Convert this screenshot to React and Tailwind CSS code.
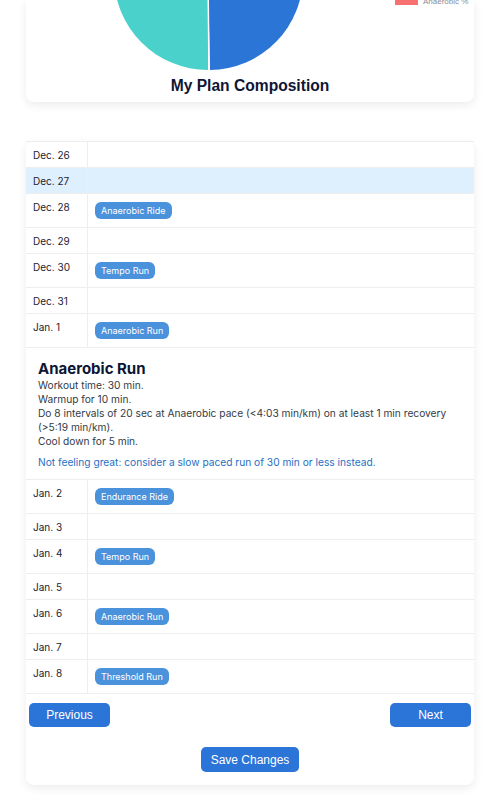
const days = [
  { date: 'Dec. 26' },
  { date: 'Dec. 27', today: true },
  { date: 'Dec. 28', workout: 'Anaerobic Ride' },
  { date: 'Dec. 29' },
  { date: 'Dec. 30', workout: 'Tempo Run' },
  { date: 'Dec. 31' },
  { date: 'Jan. 1', workout: 'Anaerobic Run', open: true },
  { date: 'Jan. 2', workout: 'Endurance Ride' },
  { date: 'Jan. 3' },
  { date: 'Jan. 4', workout: 'Tempo Run' },
  { date: 'Jan. 5' },
  { date: 'Jan. 6', workout: 'Anaerobic Run' },
  { date: 'Jan. 7' },
  { date: 'Jan. 8', workout: 'Threshold Run' },
];

const Detail = () => (
  <div className="border-b border-[#eeeeee] px-3 pt-[12px] pb-[10px] text-[10.2px] leading-[14px] text-[#333a45]">
    <h3 className="text-[15px] leading-[18px] font-bold text-[#0d1535]">Anaerobic Run</h3>
    <p>Workout time: 30 min.</p>
    <p>Warmup for 10 min.</p>
    <p>Do 8 intervals of 20 sec at Anaerobic pace (&lt;4:03 min/km) on at least 1 min recovery (&gt;5:19 min/km).</p>
    <p>Cool down for 5 min.</p>
    <p className="mt-[7px] text-[#1f6fc4]">Not feeling great: consider a slow paced run of 30 min or less instead.</p>
  </div>
);

const App = () => {
  return (
    <div className="min-h-screen bg-white px-[26px] font-['Inter',sans-serif]">
      {/* chart card */}
      <div className="rounded-b-lg bg-white shadow-[0_3px_10px_rgba(0,0,0,0.08)] pb-[6px]">
        <svg width="448" height="70" viewBox="0 0 448 70" className="block">
          <path d="M182 -24 L182 70 A94 94 0 0 1 182 -118 Z" fill="#4bd1cb" />
          <path d="M182 -24 L182 -118 A94 94 0 0 1 184 70 Z" fill="#2b75d7" />
          <line x1="182" y1="-24" x2="183" y2="70" stroke="#ffffff" strokeWidth="1.5" />
          <rect x="369" y="-6" width="23" height="11" fill="#f87171" />
          <text x="397" y="4" fontSize="8" fill="#8a8f99" fontFamily="Liberation Sans, Arial, sans-serif">Anaerobic %</text>
        </svg>
        <h2 className="mt-[6px] text-center font-['Liberation_Sans',Arial,sans-serif] text-[15.6px] leading-[20px] font-bold text-[#0f1635]">
          My Plan Composition
        </h2>
      </div>

      {/* calendar card */}
      <div className="mt-[39px] rounded-lg bg-white shadow-[0_3px_10px_rgba(0,0,0,0.08)] pb-[13px]">
        <div className="border-t border-[#eeeeee]">
          {days.map((d) => (
            <div key={d.date}>
              <div className={`flex border-b border-[#eeeeee] ${d.today ? 'bg-[#def0fd]' : ''}`}>
                <div className="w-[62px] shrink-0 border-r border-[#eeeeee] pl-[7px] pt-[7px] pb-[6px] text-[10px] leading-[12px] text-[#1e2330]">
                  {d.date}
                </div>
                <div className="flex flex-1 items-start px-[7px] py-[8px]">
                  {d.workout && (
                    <span className="block rounded-[6px] bg-[#4a92dc] px-[6px] text-[9px] leading-[17px] text-white">
                      {d.workout}
                    </span>
                  )}
                </div>
              </div>
              {d.open && <Detail />}
            </div>
          ))}
        </div>

        <div className="mt-[9px] flex justify-between px-[3px] font-['Liberation_Sans',Arial,sans-serif]">
          <button className="h-[24px] w-[81px] rounded-[5px] bg-[#2b74d8] text-[12px] text-white">Previous</button>
          <button className="h-[24px] w-[81px] rounded-[5px] bg-[#2b74d8] text-[12px] text-white">Next</button>
        </div>
        <div className="mt-[20px] flex justify-center font-['Liberation_Sans',Arial,sans-serif]">
          <button className="h-[25px] w-[98px] rounded-[5px] bg-[#2b74d8] text-[12px] text-white">Save Changes</button>
        </div>
      </div>
    </div>
  );
};

export default App;
